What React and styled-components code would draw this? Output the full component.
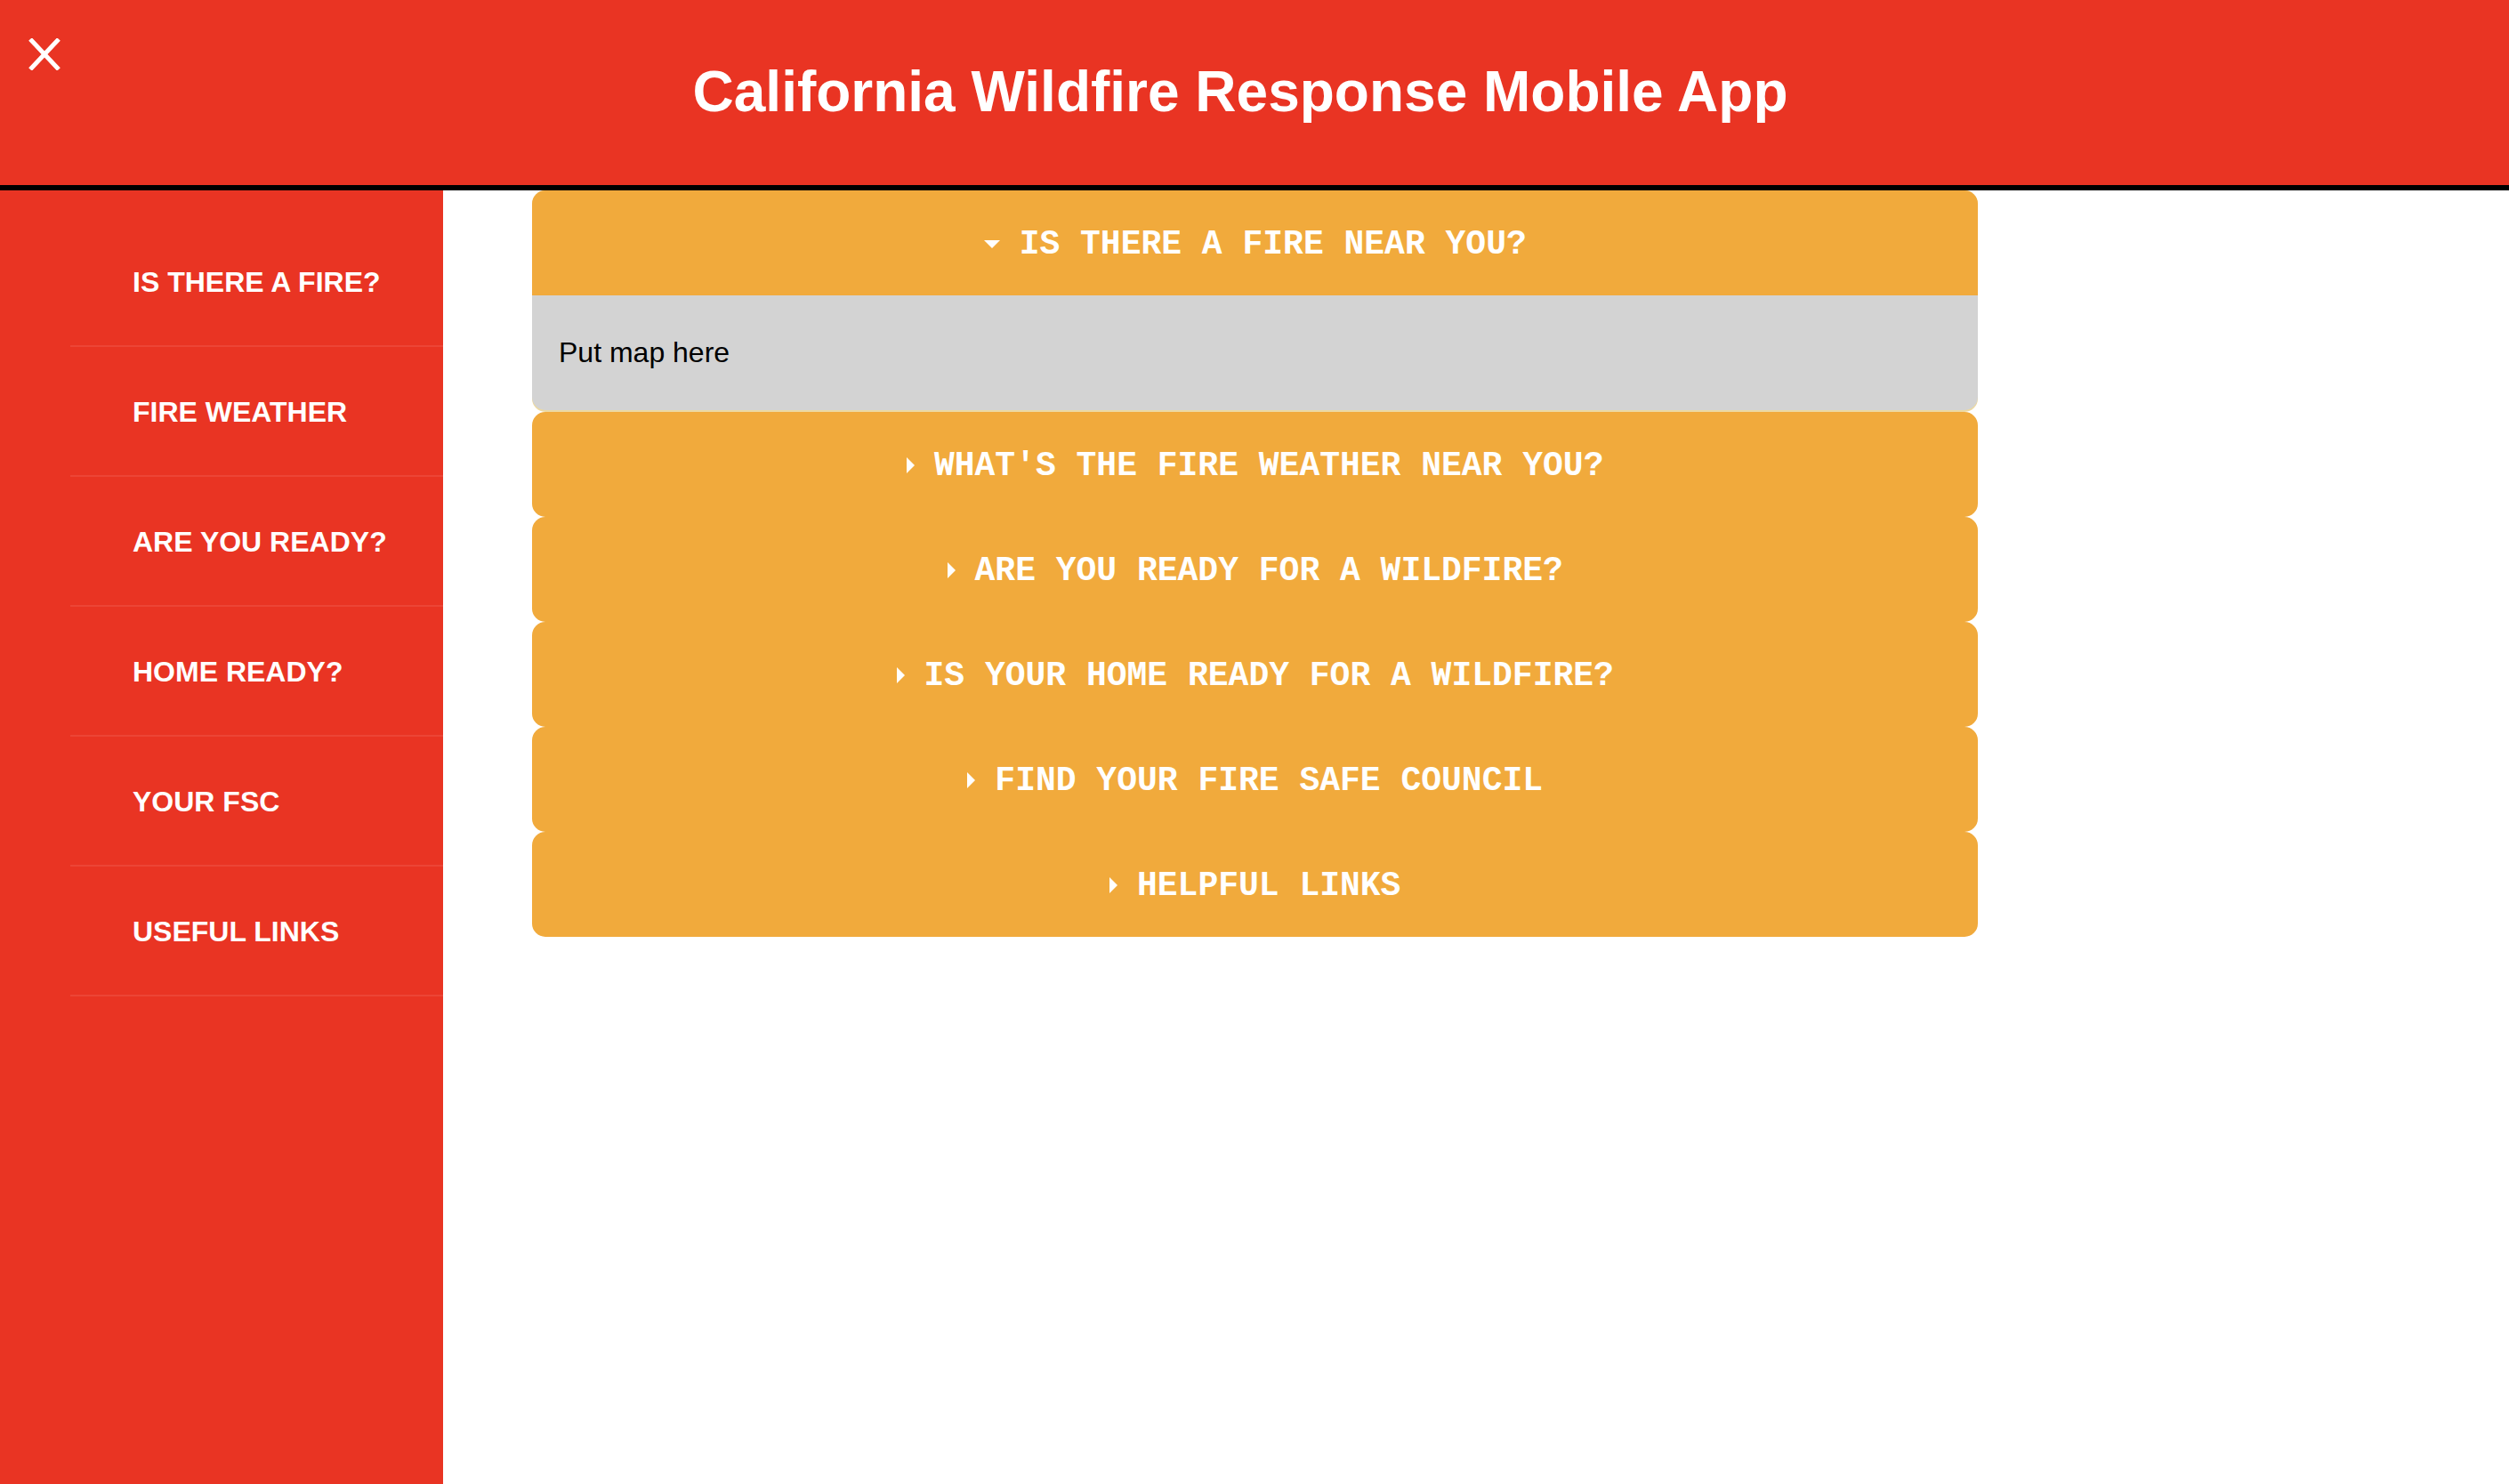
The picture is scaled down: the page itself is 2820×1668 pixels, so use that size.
import React, { useState } from 'react';
import styled, { createGlobalStyle } from 'styled-components';

const GlobalStyle = createGlobalStyle`
  * {
    box-sizing: border-box;
  }
  body {
    margin: 0;
    background: #fff;
    font-family: "Liberation Sans", Arial, sans-serif;
  }
`;

const Page = styled.div`
  display: flex;
  flex-direction: column;
  min-height: 100vh;
`;

const Header = styled.header`
  position: relative;
  display: flex;
  align-items: center;
  justify-content: center;
  height: 214px;
  padding: 2px 32px 4px 0;
  background: #e93423;
  border-bottom: 6px solid #000;
`;

const CloseBtn = styled.button`
  position: absolute;
  top: 43px;
  left: 32px;
  width: 36px;
  height: 36px;
  padding: 0;
  border: none;
  background: none;
  cursor: pointer;
  display: flex;
`;

const Title = styled.h1`
  margin: 0;
  color: #fff;
  font-size: 64px;
  font-weight: 700;
  font-family: "Liberation Sans", Arial, sans-serif;
`;

const Body = styled.div`
  flex: 1;
  display: flex;
`;

const Sidebar = styled.nav`
  width: 498px;
  flex-shrink: 0;
  background: #e93423;
  padding-top: 30px;
`;

const NavList = styled.ul`
  list-style: none;
  margin: 0 0 0 79px;
  padding: 0;
`;

const NavItem = styled.li`
  display: flex;
  align-items: center;
  height: 146px;
  padding: 3px 0 0 70px;
  border-bottom: 2px solid #ec4536;
  color: #fff;
  font-size: 32px;
  font-weight: 700;
  text-transform: uppercase;
  cursor: pointer;
`;

const Main = styled.main`
  flex: 1;
`;

const Accordion = styled.div`
  width: 70%;
  margin-left: 100px;
  display: flex;
  flex-direction: column;
`;

const Item = styled.div`
  border-radius: 15px;
  overflow: hidden;
  padding-bottom: ${p => (p.$open ? '2px' : '0')};
  background: ${p => (p.$open ? '#ecd9a2' : '#f1aa3c')};
`;

const Summary = styled.div`
  display: flex;
  align-items: center;
  justify-content: center;
  gap: 22px;
  height: 118px;
  padding-top: 2px;
  background: #f1aa3c;
  color: #fff;
  font-family: "Courier New", "Liberation Mono", monospace;
  font-size: 38px;
  font-weight: 700;
  text-transform: uppercase;
  cursor: pointer;
  user-select: none;
`;

const Marker = styled.span`
  width: 0;
  height: 0;
  border-style: solid;
  border-color: transparent;
  ${p =>
    p.$open
      ? `border-width: 9px 9.5px 0 9.5px; border-top-color: #fff;`
      : `border-width: 9.5px 0 9.5px 9px; border-left-color: #fff;`}
`;

const Content = styled.div`
  background: #d3d3d3;
  padding: 46px 30px;
  font-size: 32px;
  line-height: 37px;
  color: #000;
  border-radius: 0 0 15px 15px;
`;

const navLinks = [
  'Is there a fire?',
  'Fire weather',
  'Are you ready?',
  'Home ready?',
  'Your FSC',
  'Useful links'
];

const sections = [
  { title: 'Is there a fire near you?', body: 'Put map here' },
  { title: "What's the fire weather near you?", body: 'Put weather here' },
  { title: 'Are you ready for a wildfire?', body: 'Put checklist here' },
  { title: 'Is your home ready for a wildfire?', body: 'Put home tips here' },
  { title: 'Find your Fire Safe Council', body: 'Put FSC finder here' },
  { title: 'Helpful links', body: 'Put links here' }
];

const App = () => {
  const [open, setOpen] = useState({ 0: true });

  const toggle = i => setOpen(prev => ({ ...prev, [i]: !prev[i] }));

  return (
    <Page>
      <GlobalStyle />
      <Header>
        <CloseBtn aria-label="Close menu">
          <svg width="36" height="36" viewBox="0 0 36 36">
            <path d="M2 1 L34 35 M34 1 L2 35" stroke="#fff" strokeWidth="5" fill="none" />
          </svg>
        </CloseBtn>
        <Title>California Wildfire Response Mobile App</Title>
      </Header>
      <Body>
        <Sidebar>
          <NavList>
            {navLinks.map(link => (
              <NavItem key={link}>{link}</NavItem>
            ))}
          </NavList>
        </Sidebar>
        <Main>
          <Accordion>
            {sections.map((s, i) => (
              <Item key={s.title} $open={!!open[i]}>
                <Summary onClick={() => toggle(i)}>
                  <Marker $open={!!open[i]} />
                  <span>{s.title}</span>
                </Summary>
                {open[i] && <Content>{s.body}</Content>}
              </Item>
            ))}
          </Accordion>
        </Main>
      </Body>
    </Page>
  );
};

export default App;
